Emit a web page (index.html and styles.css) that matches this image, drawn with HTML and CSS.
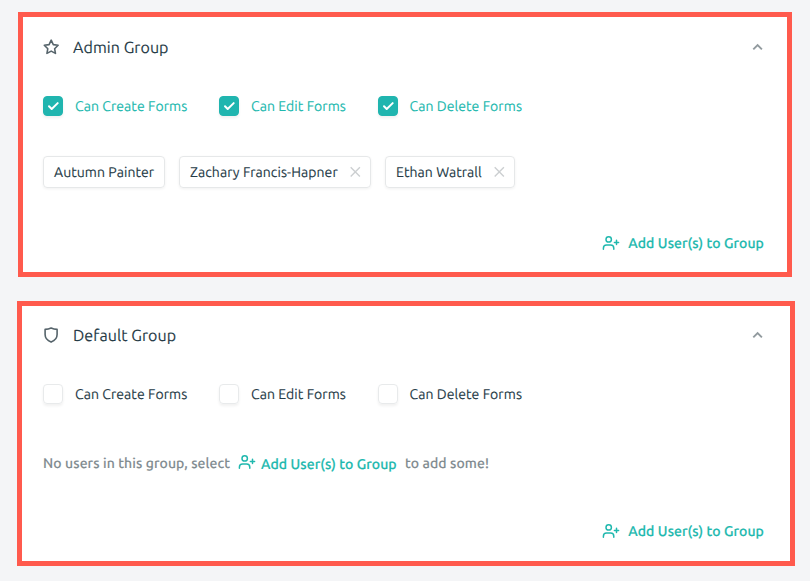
FILE: index.html
```html
<!DOCTYPE html>
<html lang="en">
<head>
<meta charset="utf-8">
<title>Groups</title>
<link rel="stylesheet" href="styles.css">
</head>
<body>
<svg class="defs" width="0" height="0" aria-hidden="true">
  <symbol id="user-plus" viewBox="0 0 18 16"><g fill="none" stroke="currentColor" stroke-width="1.5" stroke-linecap="round" stroke-linejoin="round"><circle cx="6.7" cy="4.4" r="2.7"/><path d="M1.400 14.200v-1c0-2 1.200-3.200 3.200-3.200h4c2 0 3.200 1.200 3.200 3.200v1M14.500 5.300v4.200M12.400 7.400h4.200"/></g></symbol>
  <symbol id="chevron" viewBox="0 0 12 8"><path d="M1.300 6.300 5.600 2l4.300 4.300" fill="none" stroke="currentColor" stroke-width="1.9"/></symbol>
  <symbol id="check" viewBox="0 0 20 20"><path d="m6 10.300 2.700 2.700 6-5.900" fill="none" stroke="currentColor" stroke-width="2" stroke-linecap="round" stroke-linejoin="round"/></symbol>
  <symbol id="cross" viewBox="0 0 12 12"><path d="m1.700 1.200 9.200 9.200M10.900 1.200 1.700 10.400" stroke="currentColor" stroke-width="1.400"/></symbol>
</svg>
<main>
  <section class="card admin">
    <header>
      <svg class="group-icon" viewBox="0 0 16 16"><path d="m8.200 1.200 2.100 4.400 4.800.7-3.500 3.400.85 4.700-4.250-2.250L3.950 14.400l.85-4.700L1.300 6.300l4.800-.7z" fill="none" stroke="currentColor" stroke-width="1.600" stroke-linejoin="round"/></svg>
      <h2>Admin Group</h2>
      <svg class="chevron"><use href="#chevron"/></svg>
    </header>
    <div class="permissions">
      <label class="on"><span class="box"><svg><use href="#check"/></svg></span><span>Can Create Forms</span></label>
      <label class="on"><span class="box"><svg><use href="#check"/></svg></span><span>Can Edit Forms</span></label>
      <label class="on"><span class="box"><svg><use href="#check"/></svg></span><span>Can Delete Forms</span></label>
    </div>
    <div class="users">
      <div class="tag"><span>Autumn Painter</span></div>
      <div class="tag"><span>Zachary Francis-Hapner</span><svg><use href="#cross"/></svg></div>
      <div class="tag"><span>Ethan Watrall</span><svg><use href="#cross"/></svg></div>
    </div>
    <footer><a class="add"><svg><use href="#user-plus"/></svg><span>Add User(s) to Group</span></a></footer>
  </section>
  <section class="card default">
    <header>
      <svg class="group-icon" viewBox="0 0 16 16"><path d="M8.100 1c2.200 1 4.100 1.300 6 1.400v5.100c0 3.500-2.200 6.100-6 7.600-3.800-1.500-6-4.100-6-7.600V2.400C4 2.300 5.900 2 8.100 1z" fill="none" stroke="currentColor" stroke-width="1.600" stroke-linejoin="round"/></svg>
      <h2>Default Group</h2>
      <svg class="chevron"><use href="#chevron"/></svg>
    </header>
    <div class="permissions">
      <label><span class="box"></span><span>Can Create Forms</span></label>
      <label><span class="box"></span><span>Can Edit Forms</span></label>
      <label><span class="box"></span><span>Can Delete Forms</span></label>
    </div>
    <p class="empty"><span class="lead">No users in this group, select</span><a class="add"><svg><use href="#user-plus"/></svg><span>Add User(s) to Group</span></a><span class="tail">to add some!</span></p>
    <footer><a class="add"><svg><use href="#user-plus"/></svg><span>Add User(s) to Group</span></a></footer>
  </section>
</main>
</body>
</html>
```
FILE: styles.css
```css
* { box-sizing: border-box; }
body {
  margin: 0;
  height: 581px;
  overflow: hidden;
  background: #f4f5f7;
  color: #263b47;
  font: 14px/20px Ubuntu, "Noto Sans", sans-serif;
  letter-spacing: .07px;
  text-rendering: geometricPrecision;
  -webkit-text-stroke: .12px;
  white-space: nowrap;
}
.defs { display: block; }
svg { display: block; flex: none; }
main { padding-top: 12px; }
.card {
  height: 265px;
  border: 5px solid #ff5a4d;
  background: #fff;
}
.admin { width: 774px; margin: 0 0 24px 18px; padding: 18px 23px 0 20px; }
.default { width: 777.5px; margin-left: 17px; padding: 17px 25.500px 0 21px; }
header { display: flex; align-items: center; height: 24px; }
.group-icon { width: 16px; height: 16px; color: #56646b; }
h2 { margin: 0 auto 0 14px; padding-top: 2px; font-size: 16px; line-height: 24px; font-weight: 400; }
.chevron { width: 12px; height: 8px; color: #929b9f; }
.permissions {
  display: grid;
  grid-template-columns: 176px 158.500px 150px;
  height: 20px;
  margin-top: 37px;
}
.permissions label { display: flex; gap: 12px; }
.box {
  width: 20px;
  height: 20px;
  border: 1px solid #e8eaeb;
  border-radius: 4px;
  box-shadow: 0 2px 3px rgba(0, 0, 0, .06);
}
.box svg { width: 20px; height: 20px; margin: -1px; color: #fff; }
.on { color: #20b8ae; }
.on .box { background: #20b5af; border-color: #20b5af; }
.users {
  display: grid;
  grid-template-columns: 122px 192px 130px;
  gap: 14px;
  margin-top: 40px;
}
.tag {
  display: flex;
  align-items: center;
  justify-content: space-between;
  height: 32px;
  padding: 0 9px 0 10px;
  border: 1px solid #e6e8e9;
  border-radius: 4px;
  box-shadow: 0 1px 3px rgba(0, 0, 0, .06);
}
.tag svg { width: 12px; height: 12px; color: #cccfd1; }
footer { display: flex; justify-content: flex-end; margin-top: 45px; }
.add {
  display: flex;
  align-items: center;
  gap: 8px;
  color: #20b8ae;
  font-weight: 500;
  letter-spacing: .1px;
  -webkit-text-stroke: .2px;
}
.add svg { width: 18px; height: 16px; }
.empty {
  display: flex;
  height: 20px;
  margin: 49px 0 0;
  color: #818b90;
  font-weight: 500;
  letter-spacing: .1px;
}
.empty .lead { width: 195px; }
.empty .add { width: 159px; height: 22px; margin-right: 8px; gap: 5px; }
.empty .add svg { margin-top: -4px; }
.default footer { margin-top: 48px; }
```
